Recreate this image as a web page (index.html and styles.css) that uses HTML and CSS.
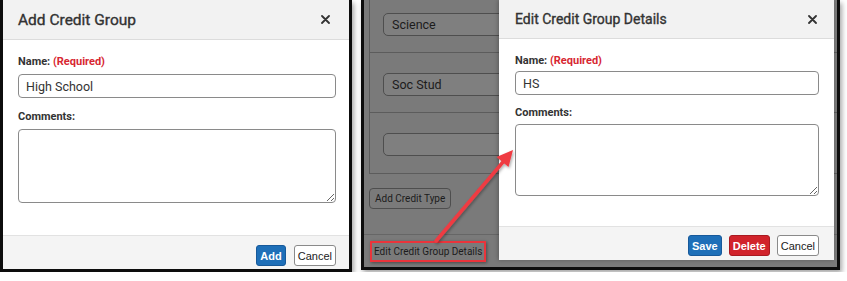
FILE: index.html
```html
<!DOCTYPE html>
<html lang="en">
<head>
  <meta charset="UTF-8" />
  <title>Credit Group</title>
  <link rel="stylesheet" href="styles.css">
</head>
<body>

  <div class="shots">

    <!-- Captura 1: novo grupo -->
    <div class="shot shot-left">
      <div class="dlg">
        <div class="dlg-header">
          <h2>Add Credit Group</h2>
          <span class="close">
            <svg width="9" height="9" viewBox="0 0 9 9"><path d="M1 1L8 8M8 1L1 8" stroke="#333" stroke-width="1.8" stroke-linecap="round"/></svg>
          </span>
        </div>
        <div class="dlg-body">
          <label class="lbl">Name: <span class="req">(Required)</span></label>
          <input type="text" class="field" value="High School" />
          <label class="lbl lbl-gap">Comments:</label>
          <textarea class="area"></textarea>
        </div>
        <div class="dlg-footer">
          <button class="btn btn-blue">Add</button>
          <button class="btn btn-white">Cancel</button>
        </div>
      </div>
    </div>

    <!-- Captura 2: editar grupo -->
    <div class="shot shot-right">
      <div class="page">
        <div class="types">
          <div class="type-row"><div class="fake-input">Science</div></div>
          <div class="type-row"><div class="fake-input">Soc Stud</div></div>
          <div class="type-row"><div class="fake-input"></div></div>
        </div>
        <div class="page-btn">Add Credit Type</div>
        <div class="page-bottom">
          <span class="hl">Edit Credit Group Details</span>
        </div>
      </div>

      <div class="dlg dlg-sm">
        <div class="dlg-header">
          <h2>Edit Credit Group Details</h2>
          <span class="close">
            <svg width="9" height="9" viewBox="0 0 9 9"><path d="M1 1L8 8M8 1L1 8" stroke="#333" stroke-width="1.8" stroke-linecap="round"/></svg>
          </span>
        </div>
        <div class="dlg-body">
          <label class="lbl">Name: <span class="req">(Required)</span></label>
          <input type="text" class="field" value="HS" />
          <label class="lbl lbl-gap">Comments:</label>
          <textarea class="area"></textarea>
        </div>
        <div class="dlg-footer">
          <button class="btn btn-blue">Save</button>
          <button class="btn btn-red">Delete</button>
          <button class="btn btn-white">Cancel</button>
        </div>
      </div>

      <!-- seta de destaque -->
      <svg class="arrow" width="473" height="267" viewBox="0 0 473 267">
        <defs>
          <filter id="sh" x="-20%" y="-20%" width="140%" height="140%">
            <feDropShadow dx="1" dy="1.5" stdDeviation="1.5" flood-color="#000" flood-opacity="0.35"/>
          </filter>
        </defs>
        <g filter="url(#sh)">
          <line x1="72" y1="241" x2="139" y2="162" stroke="#ef3b42" stroke-width="3.5" stroke-linecap="round"/>
          <polygon points="149,150 144.5,167 132.5,157" fill="#ef3b42"/>
        </g>
      </svg>
    </div>

  </div>

</body>
</html>
```

FILE: styles.css
```css
body {
  margin: 0;
  background: #fff;
  font-family: Roboto, "Liberation Sans", Arial, sans-serif;
  color: #333;
}

.shots {
  display: flex;
  gap: 9px;
  align-items: flex-start;
}

/* molduras das capturas */
.shot {
  border: 3px solid #0d0d0d;
  border-top: none;
  box-shadow: 2px 3px 5px rgba(0, 0, 0, 0.35);
  position: relative;
  overflow: hidden;
}

.shot-left {
  width: 346px;
  height: 269px;
}

.shot-right {
  width: 473px;
  height: 267px;
  background: #7a7a7a;
}

/* Dialogo */
.dlg {
  display: flex;
  flex-direction: column;
  background: #fff;
  height: 100%;
}

.dlg-header {
  height: 40px;
  background: #f2f2f2;
  border-bottom: 1px solid #dcdcdc;
  display: flex;
  align-items: center;
  justify-content: space-between;
  padding: 0 19px 0 15px;
  box-sizing: border-box;
}

.dlg-header h2 {
  margin: 0;
  font-size: 15.5px;
  font-weight: normal;
  -webkit-text-stroke: 0.35px #333;
  color: #333;
}

.close {
  display: flex;
  cursor: pointer;
}

.dlg-body {
  flex: 1;
  display: flex;
  flex-direction: column;
  padding: 15px 13px 0 15px;
}

.lbl {
  font-size: 11px;
  font-weight: bold;
  line-height: 14px;
  margin-bottom: 5px;
  color: #333;
}

.lbl-gap {
  margin-top: 12px;
}

.req {
  color: #d72631;
}

.field {
  height: 24px;
  box-sizing: border-box;
  border: 1px solid #8a8a8a;
  border-radius: 4px;
  padding: 0 7px;
  font-family: inherit;
  font-size: 12.5px;
  color: #333;
  outline: none;
}

.area {
  height: 74px;
  box-sizing: border-box;
  border: 1px solid #8a8a8a;
  border-radius: 4px;
  font-family: inherit;
  outline: none;
  resize: both;
}

.dlg-footer {
  height: 34px;
  box-sizing: border-box;
  background: #f4f4f4;
  border-top: 1px solid #e2e2e2;
  display: flex;
  justify-content: flex-end;
  align-items: flex-start;
  gap: 8px;
  padding: 9px 13px 0 0;
}

.btn {
  height: 21px;
  padding: 0 3px;
  border-radius: 3px;
  font-family: "Liberation Sans", Arial, sans-serif;
  font-size: 11px;
  cursor: pointer;
}

.btn-blue {
  background: #1e6fb8;
  border: 1px solid #17599a;
  color: #fff;
  font-weight: bold;
}

.btn-red {
  background: #d1232b;
  border: 1px solid #a81a21;
  color: #fff;
  font-weight: bold;
}

.btn-white {
  background: #fff;
  border: 1px solid #8a8a8a;
  color: #222;
}

/* dialogo menor (segunda captura) */
.dlg-sm {
  position: absolute;
  left: 135px;
  top: 0;
  width: 335px;
  height: 260px;
  box-shadow: -1px 0 4px rgba(0, 0, 0, 0.25);
}

.dlg-sm .dlg-header {
  height: 39px;
  padding: 0 17px 0 16px;
}

.dlg-sm .dlg-header h2 {
  font-size: 14px;
}

.dlg-sm .dlg-body {
  padding: 15px 15px 0 16px;
}

.dlg-sm .lbl {
  margin-bottom: 3px;
}

.dlg-sm .lbl-gap {
  margin-top: 11px;
  margin-bottom: 4px;
}

.dlg-sm .area {
  height: 72px;
}

.dlg-sm .dlg-footer {
  padding: 8px 15px 0 0;
  gap: 7px;
}

/* pagina escurecida por tras */
.page {
  display: flex;
  flex-direction: column;
  height: 100%;
}

.types {
  margin: -7px 0 0 5px;
  border-left: 1px solid #5c5c5c;
  border-bottom: 1px solid #5c5c5c;
}

.type-row {
  height: 60px;
  box-sizing: border-box;
  padding: 20px 0 0 13px;
  border-bottom: 1px solid #5c5c5c;
}

.type-row:last-child {
  border-bottom: none;
}

.fake-input {
  width: 200px;
  height: 23px;
  box-sizing: border-box;
  border: 1px solid #4e4e4e;
  border-radius: 5px;
  background: #7f7f7f;
  font-size: 12.5px;
  line-height: 21px;
  padding-left: 8px;
  color: #1c1c1c;
}

.page-btn {
  align-self: flex-start;
  margin: 14px 0 0 5px;
  height: 21px;
  box-sizing: border-box;
  border: 1px solid #4e4e4e;
  border-radius: 4px;
  padding: 0 5px;
  font-size: 10px;
  line-height: 19px;
  color: #1c1c1c;
}

.page-bottom {
  margin-top: 25px;
  border-top: 1px solid #666;
  padding: 5px 0 0 6px;
}

.hl {
  display: inline-block;
  border: 2.5px solid #ea343b;
  padding: 0 2px;
  height: 17px;
  font-size: 10px;
  line-height: 17px;
  color: #1c1c1c;
  box-shadow: 1px 1px 3px rgba(0, 0, 0, 0.4);
}

.arrow {
  position: absolute;
  left: 0;
  top: 0;
  pointer-events: none;
}
```
